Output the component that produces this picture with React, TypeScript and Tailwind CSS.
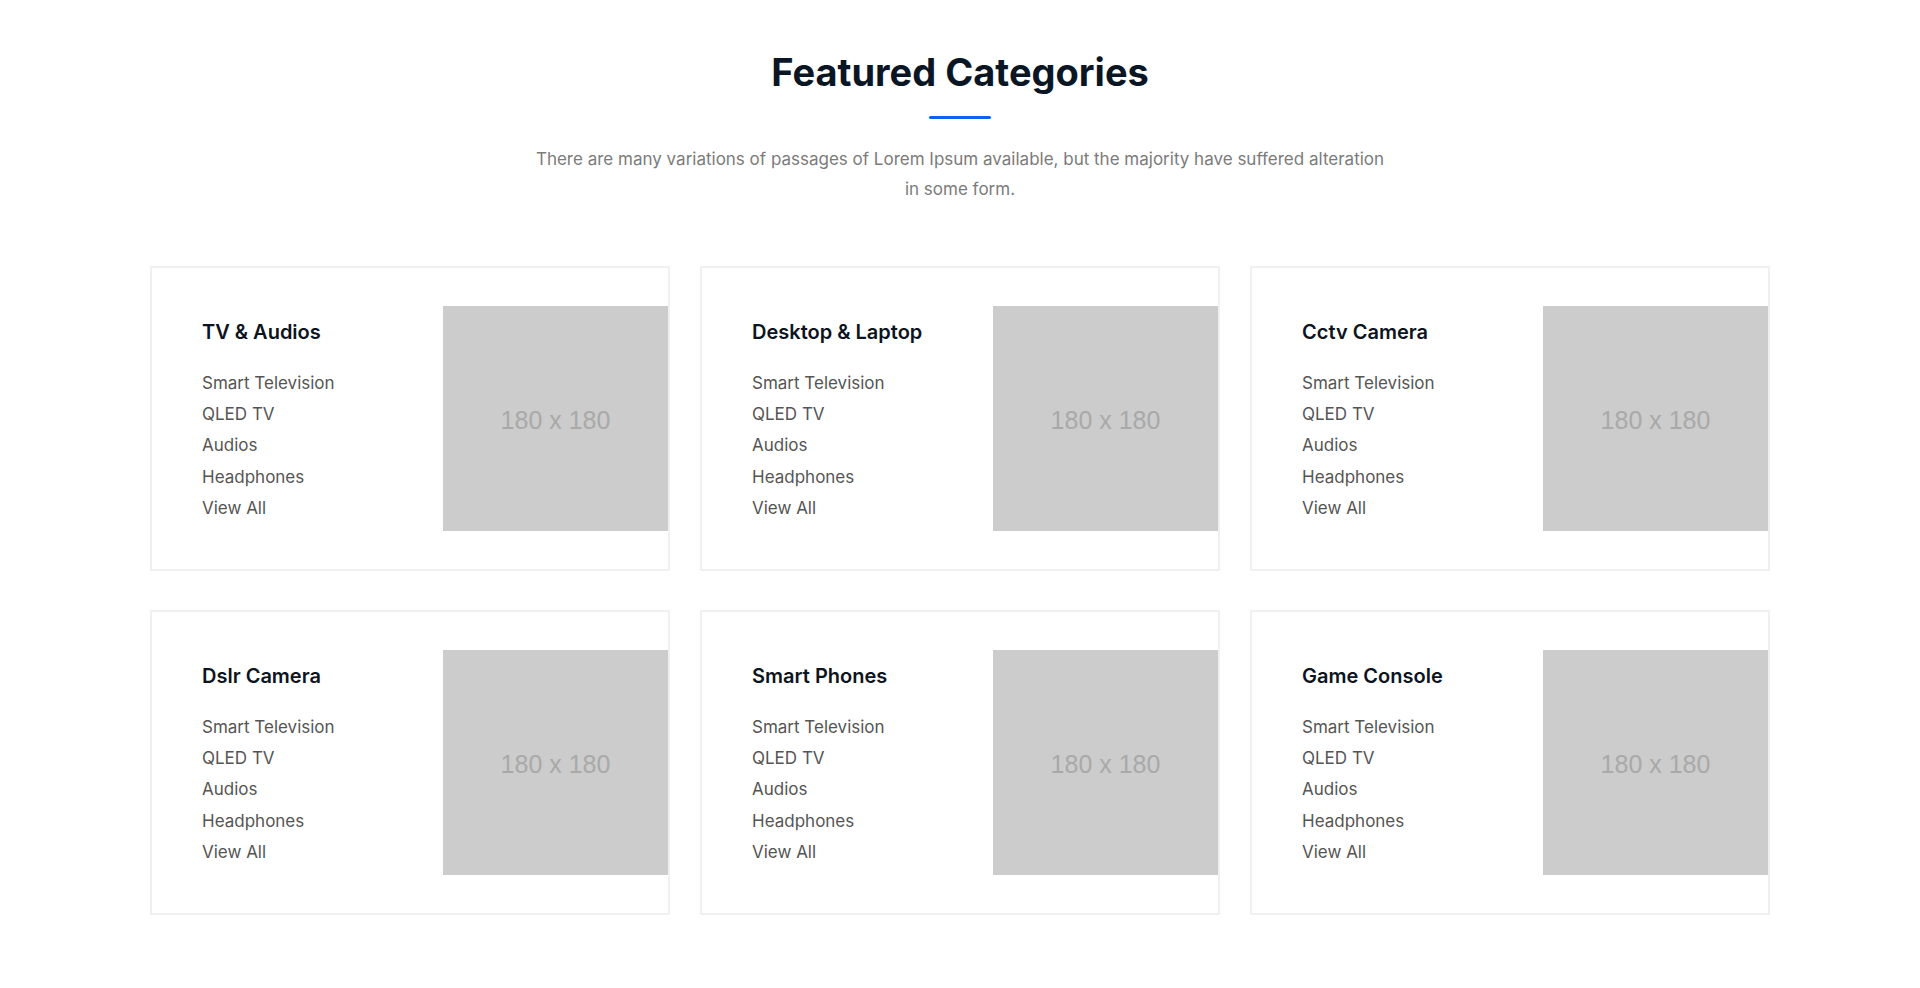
import React from "react";

const categories = [
  "TV & Audios",
  "Desktop & Laptop",
  "Cctv Camera",
  "Dslr Camera",
  "Smart Phones",
  "Game Console",
];

const items = ["Smart Television", "QLED TV", "Audios", "Headphones", "View All"];

function Card({ title }: { title: string }) {
  return (
    <div className="flex items-center border-2 border-[#f0f0f0] bg-white py-[38px] pl-[50px]">
      <div className="flex-1 pt-[7px]">
        <h3 className="text-[20px] leading-[24px] font-semibold text-[#0c1420] mb-[24px]">
          {title}
        </h3>
        <ul>
          {items.map((it) => (
            <li key={it} className="text-[17px] leading-[31.3px] text-[#555555]">
              <a href="#" className="hover:text-[#0b63f6]">{it}</a>
            </li>
          ))}
        </ul>
      </div>
      <div
        className="w-[225px] h-[225px] bg-[#cccccc] flex items-center justify-center pt-[4px] text-[25px] text-[#a9a9a9]"
        style={{ fontFamily: '"Liberation Sans", Arial, sans-serif' }}
      >
        180 x 180
      </div>
    </div>
  );
}

export default function App() {
  return (
    <div
      className="min-h-[988px] bg-white pt-[50px] pb-[75px]"
      style={{ fontFamily: 'Inter, "Noto Sans", sans-serif' }}
    >
      <div className="max-w-[1650px] mx-auto px-[15px]">
        <div className="text-center">
          <h2 className="text-[38px] leading-[44px] font-bold text-[#0b1625]">
            Featured Categories
          </h2>
          <div className="mx-auto mt-[22px] h-[3px] w-[62px] rounded-full bg-[#0b63f6]" />
          <p className="mx-auto mt-[26px] max-w-[860px] text-[17px] leading-[29.5px] text-[#7b7b7b]">
            There are many variations of passages of Lorem Ipsum available, but the majority have suffered alteration in some form.
          </p>
        </div>
        <div className="mt-[62px] grid grid-cols-3 gap-x-[30px] gap-y-[39px]">
          {categories.map((c) => (
            <Card key={c} title={c} />
          ))}
        </div>
      </div>
    </div>
  );
}
